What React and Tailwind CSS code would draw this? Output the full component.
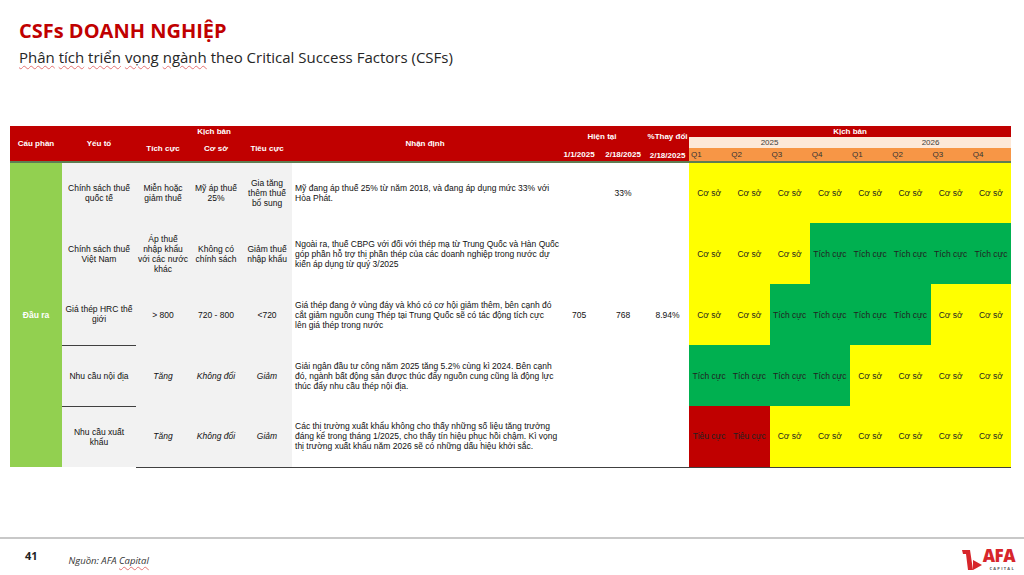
import React from "react";

const Q_ROWS = [
  ["y", "y", "y", "y", "y", "y", "y", "y"],
  ["y", "y", "y", "g", "g", "g", "g", "g"],
  ["y", "y", "g", "g", "g", "g", "y", "y"],
  ["g", "g", "g", "g", "y", "y", "y", "y"],
  ["r", "r", "y", "y", "y", "y", "y", "y"],
];

const LABEL = { y: "Cơ sở", g: "Tích cực", r: "Tiêu cực" };
const BG = { y: "bg-[#ffff00]", g: "bg-[#00b050]", r: "bg-[#c00000]" };

// line breaks follow the wrapping of the original sheet
const ROWS = [
  {
    factor: "Chính sách thuế\nquốc tế",
    pos: "Miễn hoặc\ngiảm thuế",
    base: "Mỹ áp thuế\n25%",
    neg: "Gia tăng\nthêm thuế\nbổ sung",
    note: "Mỹ đang áp thuế 25% từ năm 2018, và đang áp dụng mức 33% với\nHòa Phát.",
    v1: "",
    v2: "33%",
    chg: "",
  },
  {
    factor: "Chính sách thuế\nViệt Nam",
    pos: "Áp thuế\nnhập khẩu\nvới các nước\nkhác",
    base: "Không có\nchính sách",
    neg: "Giảm thuế\nnhập khẩu",
    note: "Ngoài ra, thuế CBPG với đối với thép mạ từ Trung Quốc và Hàn Quốc\ngóp phần hỗ trợ thị phần thép của các doanh nghiệp trong nước dự\nkiến áp dụng từ quý 3/2025",
    v1: "",
    v2: "",
    chg: "",
  },
  {
    factor: "Giá thép HRC thế\ngiới",
    pos: "> 800",
    base: "720 - 800",
    neg: "<720",
    note: "Giá thép đang ở vùng đáy và khó có cơ hội giảm thêm, bên cạnh đó\ncắt giảm nguồn cung Thép tại Trung Quốc sẽ có tác động tích cực\nlên giá thép trong nước",
    v1: "705",
    v2: "768",
    chg: "8.94%",
    line: true,
  },
  {
    factor: "Nhu cầu nội địa",
    pos: "Tăng",
    base: "Không đổi",
    neg: "Giảm",
    italic: true,
    note: "Giải ngân đầu tư công năm 2025 tăng 5.2% cùng kì 2024. Bên cạnh\nđó, ngành bất động sản được thúc đẩy nguồn cung cũng là động lực\nthúc đẩy nhu cầu thép nội địa.",
    v1: "",
    v2: "",
    chg: "",
    line: true,
  },
  {
    factor: "Nhu cầu xuất\nkhẩu",
    pos: "Tăng",
    base: "Không đổi",
    neg: "Giảm",
    italic: true,
    note: "Các thị trường xuất khẩu không cho thấy những số liệu tăng trưởng\nđáng kể trong tháng 1/2025, cho thấy tín hiệu phục hồi chậm. Kì vọng\nthị trường xuất khẩu năm 2026 sẽ có những dấu hiệu khởi sắc.",
    v1: "",
    v2: "",
    chg: "",
    last: true,
  },
];

function Squiggle({ children }) {
  return (
    <span className="underline decoration-wavy decoration-[#e57373] decoration-1 underline-offset-2">{children}</span>
  );
}

function AfaLogo() {
  return (
    <div className="flex items-start">
      <svg width="21" height="22" viewBox="0 0 21 22" className="mt-[1px]">
        <path d="M0 1 H8 L11 21 H6 L4 5 H1 Z" fill="#d7262b" />
        <path d="M11 11 L20 16 L11 21 Z" fill="#d7262b" />
      </svg>
      <div className="flex flex-col items-end">
        <span className="text-[17px] leading-[15px] font-extrabold text-[#d7262b] tracking-[-0.5px]">AFA</span>
        <span className="text-[4px] leading-[5px] mt-[3px] tracking-[1.3px] text-[#555] font-bold">CAPITAL</span>
      </div>
    </div>
  );
}

export default function App() {
  const th = "bg-[#c00000] text-white font-bold";
  const gray = "bg-[#f2f2f2] text-center whitespace-pre";
  const bottom = " border-b border-[#404040]";
  return (
    <div className="w-[1024px] h-[575px] bg-white flex flex-col overflow-hidden font-['Open_Sans',sans-serif]">
      <div className="pt-[17px] pl-[19px]">
        <h1 className="text-[20px] leading-[27px] font-bold text-[#c00000]">CSFs DOANH NGHIỆP</h1>
        <p className="text-[15px] leading-[22px] text-[#262626] mt-[2px]">
          <Squiggle>Phân</Squiggle> <Squiggle>tích</Squiggle> <Squiggle>triển</Squiggle> <Squiggle>vọng</Squiggle>{" "}
          <Squiggle>ngành</Squiggle> theo Critical Success Factors (CSFs)
        </p>
      </div>

      <table className="table-fixed border-collapse w-[1001px] ml-[10px] mt-[58px] text-[8px] leading-[10px] text-[#111] font-['Liberation_Sans',Arial,sans-serif]">
        <colgroup>
          <col className="w-[52px]" />
          <col className="w-[74px]" />
          <col className="w-[54px]" />
          <col className="w-[52px]" />
          <col className="w-[50px]" />
          <col className="w-[266px]" />
          <col className="w-[42px]" />
          <col className="w-[46px]" />
          <col className="w-[43px]" />
          {Array.from({ length: 8 }).map((_, i) => (
            <col key={i} className="w-[40.25px]" />
          ))}
        </colgroup>
        <thead>
          <tr className="h-[11px]">
            <th rowSpan={3} className={th}>Cấu phần</th>
            <th rowSpan={3} className={th}>Yếu tố</th>
            <th colSpan={3} className={th}>Kịch bản</th>
            <th rowSpan={3} className={th}>Nhận định</th>
            <th colSpan={2} rowSpan={2} className={th}>Hiện tại</th>
            <th rowSpan={2} className={th + " whitespace-nowrap"}>%Thay đổi</th>
            <th colSpan={8} className={th}>Kịch bản</th>
          </tr>
          <tr className="h-[11px]">
            <th rowSpan={2} className={th}>Tích cực</th>
            <th rowSpan={2} className={th}>Cơ sở</th>
            <th rowSpan={2} className={th}>Tiêu cực</th>
            <th colSpan={4} className="bg-[#fde9d9] text-[#404040] font-normal">2025</th>
            <th colSpan={4} className="bg-[#fde9d9] text-[#404040] font-normal">2026</th>
          </tr>
          <tr className="h-[14px]">
            <th className={th}>1/1/2025</th>
            <th className={th}>2/18/2025</th>
            <th className={th + " align-bottom"}>2/18/2025</th>
            {["Q1", "Q2", "Q3", "Q4", "Q1", "Q2", "Q3", "Q4"].map((q, i) => (
              <th key={i} className="bg-[#f79646] text-[#333] font-normal text-left pl-[2px]">{q}</th>
            ))}
          </tr>
        </thead>
        <tbody className="text-[8.5px]">
          {ROWS.map((r, i) => (
            <tr key={i} className={"h-[61px] " + (i === 0 ? "border-t-2 border-[#5e7d52]" : "")}>
              {i === 0 && (
                <td rowSpan={5} className="bg-[#92d050] text-white font-bold text-center">Đầu ra</td>
              )}
              <td className={gray + (r.line ? bottom : "")}>{r.factor}</td>
              <td className={gray + (r.italic ? " italic" : "") + (r.last ? bottom : "")}>{r.pos}</td>
              <td className={gray + (r.italic ? " italic" : "") + (r.last ? bottom : "")}>{r.base}</td>
              <td className={gray + (r.italic ? " italic" : "") + (r.last ? bottom : "")}>{r.neg}</td>
              <td className={"pl-[3px] text-left whitespace-pre" + (r.last ? bottom : "")}>{r.note}</td>
              <td className={"text-center" + (r.last ? bottom : "")}>{r.v1}</td>
              <td className={"text-center" + (r.last ? bottom : "")}>{r.v2}</td>
              <td className={"text-center" + (r.last ? bottom : "")}>{r.chg}</td>
              {Q_ROWS[i].map((c, j) => (
                <td
                  key={j}
                  className={BG[c] + " text-center whitespace-nowrap text-[#222]" + (r.last ? bottom : "")}
                >
                  {LABEL[c]}
                </td>
              ))}
            </tr>
          ))}
        </tbody>
      </table>

      <div className="mt-auto h-[38px] border-t-2 border-[#c8c8c8] flex items-center">
        <span className="ml-[25px] text-[11px] font-bold text-[#222] -mt-[2px]">41</span>
        <span className="ml-[31px] mt-[8px] text-[9.5px] italic text-[#333]">
          Nguồn: AFA <Squiggle>Capital</Squiggle>
        </span>
        <div className="ml-auto mr-[9px] mt-[4px]">
          <AfaLogo />
        </div>
      </div>
    </div>
  );
}
